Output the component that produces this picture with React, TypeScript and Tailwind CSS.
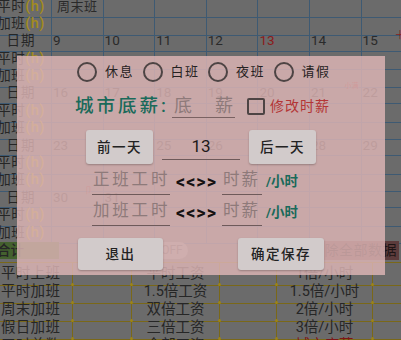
import React from "react";

const FONT = "font-['Roboto','Noto_Sans_CJK_SC',sans-serif]";

type Cell = { text?: string; red?: boolean; mark?: string; markPos?: string };

const LabelCell = ({ label }: { label: "日期" | "平时" | "加班" }) => (
  <div className="h-full border-r border-b border-[#3e5a73] flex items-center overflow-visible">
    <div className="-ml-[4px] w-[50px] text-center whitespace-nowrap text-[13.5px] tracking-[0.5px] text-[#262626] shrink-0">
      {label === "日期" ? (
        <span className="tracking-[1px]">日期</span>
      ) : (
        <>
          {label}
          <span className="text-[14.5px] text-[#a38c1c] font-medium">(h)</span>
        </>
      )}
    </div>
  </div>
);

const DateRow = ({ cells }: { cells: Cell[] }) => (
  <div className="grid grid-cols-[52px_repeat(7,51.6px)] h-[17.4px]">
    <LabelCell label="日期" />
    {cells.map((c, i) => (
      <div
        key={i}
        className="relative h-full border-r border-b border-[#3e5a73] flex items-center pl-[1px] text-[13.5px] text-[#2a2a2a]"
      >
        <span className={c.red ? "text-[#8a1c1c]" : ""}>{c.text}</span>
        {c.mark && (
          <span className={`absolute text-[7px] leading-none text-[#8a1c1c] ${c.markPos}`}>{c.mark}</span>
        )}
      </div>
    ))}
  </div>
);

const HourRow = ({ label, first }: { label: "平时" | "加班"; first?: string }) => (
  <div className="grid grid-cols-[52px_repeat(7,51.6px)] h-[17.4px]">
    <LabelCell label={label} />
    {Array.from({ length: 7 }).map((_, i) => (
      <div
        key={i}
        className="h-full border-r border-b border-[#3e5a73] flex items-center justify-center text-[13px] tracking-[0.5px] text-[#2a2a2a] whitespace-nowrap"
      >
        {i === 0 ? first : ""}
      </div>
    ))}
  </div>
);

const Dot = () => (
  <span className="absolute -right-[1.5px] -bottom-[1.5px] w-[3px] h-[3px] rounded-full bg-[#9c8418] z-10" />
);

const TableRow = ({ a, b, c, red }: { a: string; b: string; c: string; red?: boolean }) => (
  <div className="grid grid-cols-[73px_59px_88px_57px_96px_60px] h-[18px] text-[14.5px] text-[#262626] whitespace-nowrap">
    <div className="relative border-r border-b border-[#7a6818] flex items-center pl-[1px] tracking-[0.3px]">
      {a}
      <Dot />
    </div>
    <div className="relative border-r border-b border-[#7a6818]">
      <Dot />
    </div>
    <div className="relative border-r border-b border-[#7a6818] flex items-center justify-center">
      {b}
      <Dot />
    </div>
    <div className="relative border-r border-b border-[#7a6818]">
      <Dot />
    </div>
    <div className={`relative border-r border-b border-[#7a6818] flex items-center justify-center ${red ? "text-[#7e1616]" : ""}`}>
      {c}
      <Dot />
    </div>
    <div className="relative border-b border-[#7a6818]" />
  </div>
);

const Radio = ({ label }: { label: string }) => (
  <div className="flex items-center mr-[8.5px]">
    <div className="w-[20px] h-[20px] rounded-full border-2 border-[#4d4444]" />
    <span className="ml-[8px] text-[13px] tracking-[1.5px] text-[#262222]">{label}</span>
  </div>
);

const DlgButton = ({ label, w, h }: { label: string; w: string; h: string }) => (
  <div
    className={`${w} ${h} rounded-[3px] bg-[#d2cbcb] shadow-[0_1px_2px_rgba(0,0,0,0.25)] flex items-center justify-center text-[13.5px] font-medium tracking-[1.5px] text-[#222]`}
  >
    {label}
  </div>
);

export default function App() {
  const weeks: Cell[][] = [
    [
      { text: "9" },
      { text: "10" },
      { text: "11" },
      { text: "12" },
      { text: "13", red: true },
      { text: "14" },
      { text: "15", mark: "十", markPos: "left-[34px] top-[1px] text-[9px]" },
    ],
    [
      { text: "16" },
      { text: "17" },
      { text: "18" },
      { text: "19" },
      { text: "20" },
      { text: "21", mark: "小满", markPos: "right-[2px] top-[1px]" },
      { text: "22" },
    ],
    [
      { text: "23" },
      { text: "24" },
      { text: "25" },
      { text: "26" },
      { text: "27" },
      { text: "28" },
      { text: "29" },
    ],
    [
      { text: "30", mark: "卩", markPos: "right-[10px] top-[0px] text-[8px]" },
      { text: "31" },
      {},
      {},
      {},
      {},
      {},
    ],
  ];

  return (
    <div className={`relative w-[401px] h-[340px] overflow-hidden bg-[#6b6b6b] ${FONT}`}>
      <div className="-mt-[4.5px]">
        <HourRow label="平时" first="周末班" />
        <HourRow label="加班" />
        {weeks.map((w, i) => (
          <React.Fragment key={i}>
            <DateRow cells={w} />
            <HourRow label="平时" />
            <HourRow label="加班" />
          </React.Fragment>
        ))}

        {/* 合计 row */}
        <div className="h-[23px] flex items-center text-[13.5px] text-[#262626] whitespace-nowrap">
          <div className="w-[62px] h-[17px] bg-[#44612e] flex items-center -ml-[3px] pl-0 font-medium">合计</div>
          <div className="ml-[58px] h-[17px] px-[3px] bg-[#52704a] flex items-center text-[#20401f]">试工</div>
          <div className="ml-[6px] h-[17px] w-[32px] rounded-full bg-[#8a8a8a] flex items-center justify-center text-[12px] text-[#555]">
            OFF
          </div>
          <div className="ml-[120px] h-[19px] px-[2px] bg-[#5c3b3b] flex items-center text-[14px] text-[#1e1414] tracking-[0.5px]">
            删除全部数据
          </div>
        </div>

        {/* bottom table */}
        <div className="border-t border-[#7a6818]">
          <TableRow a="平时上班" b="平时工资" c="1倍/小时" />
          <TableRow a="平时加班" b="1.5倍工资" c="1.5倍/小时" />
          <TableRow a="周末加班" b="双倍工资" c="2倍/小时" />
          <TableRow a="假日加班" b="三倍工资" c="3倍/小时" />
          <TableRow a="工时总数" b="全部工资" c="城市底薪" red />
        </div>
      </div>

      {/* Dialog */}
      <div className="absolute left-[17px] top-[56px] w-[368px] h-[219px] bg-[#deb6b6d1] flex flex-col">
        <div className="mt-[6px] h-[20px] pl-[60px] flex items-center">
          <Radio label="休息" />
          <Radio label="白班" />
          <Radio label="夜班" />
          <Radio label="请假" />
        </div>

        <div className="mt-[12px] h-[24px] flex items-end pl-[58px]">
          <div className="h-[24px] flex items-center text-[18.5px] font-medium tracking-[3px] text-[#1a6a5a] leading-none">
            城市底薪:
          </div>
          <div className="ml-[3px] w-[63px] h-[24px] border-b-[1.5px] border-[#7a6262] flex items-center justify-between px-[2px] text-[18px] text-[#8e7a7a] leading-none">
            <span>底</span>
            <span>薪</span>
          </div>
          <div className="ml-[12px] self-center w-[18px] h-[17px] border-2 border-[#4d4444] rounded-[2px]" />
          <div className="ml-[5px] self-center text-[14px] tracking-[1px] text-[#b43636]">修改时薪</div>
        </div>

        <div className="mt-[12px] h-[34px] flex items-start pl-[69px]">
          <DlgButton label="前一天" w="w-[67px]" h="h-[34px]" />
          <div className="ml-[9px] w-[78px] h-[30px] border-b-[1.5px] border-[#6e5a5a] flex items-center justify-center pt-[4px] text-[17px] text-[#1e1a1a]">
            13
          </div>
          <div className="ml-[9px]">
            <DlgButton label="后一天" w="w-[67px]" h="h-[34px]" />
          </div>
        </div>

        {["正班工时", "加班工时"].map((t, i) => (
          <div key={i} className="mt-[3px] h-[28px] flex items-end pl-[75px]">
            <div className="w-[78px] h-[28px] border-b-[1.5px] border-[#6e5a5a] flex items-center pl-[1px] text-[16.5px] tracking-[2.8px] text-[#8e7a7a] whitespace-nowrap">
              {t}
            </div>
            <div className="ml-[6px] h-[28px] flex items-center text-[18px] font-bold tracking-[1px] text-[#161212]">
              {"<<>>"}
            </div>
            <div className="ml-[5px] w-[40px] h-[28px] border-b-[1.5px] border-[#6e5a5a] flex items-center pl-[1px] text-[16.5px] tracking-[2px] text-[#8e7a7a] whitespace-nowrap">
              时薪
            </div>
            <div className="ml-[4px] h-[28px] flex items-center text-[13.5px] font-bold text-[#1a6a5a] whitespace-nowrap">
              /小时
            </div>
          </div>
        ))}

        <div className="mt-[12px] h-[32px] flex items-start pl-[61px]">
          <DlgButton label="退出" w="w-[85px]" h="h-[32px]" />
          <div className="ml-[75px]">
            <DlgButton label="确定保存" w="w-[86px]" h="h-[32px]" />
          </div>
        </div>
      </div>
    </div>
  );
}
